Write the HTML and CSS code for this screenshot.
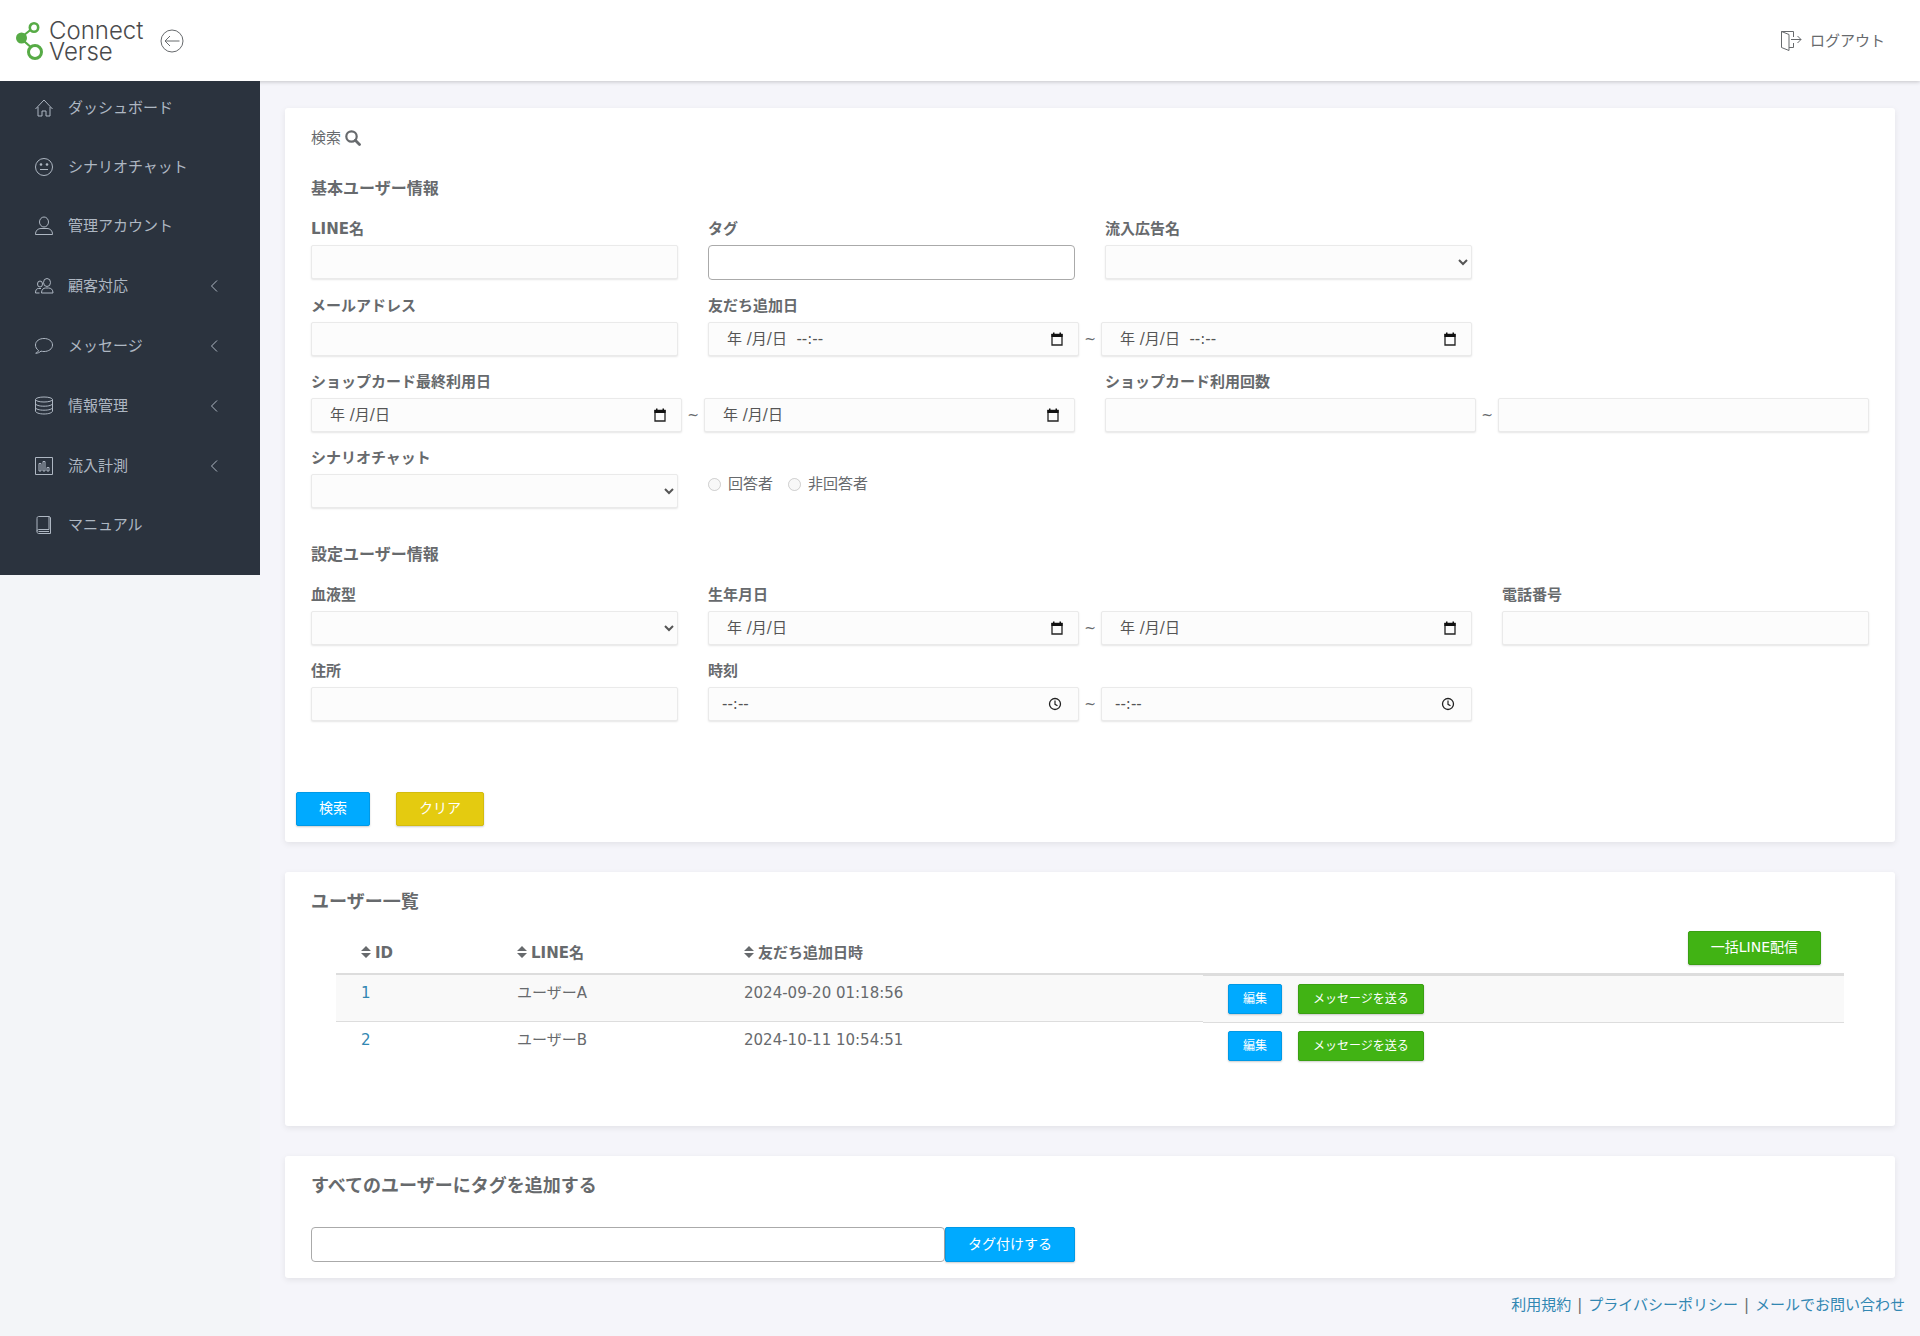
FILE: index.html
```html
<!DOCTYPE html>
<html lang="ja">
<head>
<meta charset="utf-8">
<meta name="viewport" content="width=device-width, initial-scale=1">
<title>Connect Verse</title>
<link rel="stylesheet" href="styles.css">
</head>
<body>
<svg width="0" height="0" class="sprite" aria-hidden="true">
  <symbol id="icon-calendar" viewBox="0 0 14 14"><path d="M2 2.500H12V13H2Z" fill="none" stroke="#222" stroke-width="1.300"/><path d="M1.400 2H12.600V5H1.400ZM3 .5H4.500V2H3ZM9.500.5H11V2H9.500Z" fill="#111"/></symbol>
  <symbol id="icon-clock" viewBox="0 0 14 14"><circle cx="7" cy="7" r="5.500" fill="none" stroke="#222" stroke-width="1.300"/><path d="M7 3.500V7.300L9.500 8.800" fill="none" stroke="#222" stroke-width="1.200"/></symbol>
</svg>
<header class="navbar">
  <a class="brand" href="#">
    <svg class="brand-mark" viewBox="0 0 28 40" width="28" height="40" aria-hidden="true">
      <g fill="none" stroke="#57ab46"><path d="M5 16.500 17.500 6.500M5 17.500 17 28" stroke-width="2.200"/><circle cx="18" cy="6.500" r="4.200" stroke-width="2.600" fill="#fff"/><circle cx="19" cy="31" r="6.500" stroke-width="3" fill="#fff"/></g>
      <circle cx="5.500" cy="17" r="5.500" fill="#57ab46"/>
    </svg>
    <span class="brand-name"><span>Connect</span><span>Verse</span></span>
  </a>
  <button class="toggle" type="button" aria-label="メニュー">
    <svg class="line-icon" viewBox="0 0 24 24" width="24" height="24"><circle cx="12" cy="12" r="11"/><path d="M19.500 12H5M10 7l-5 5 5 5"/></svg>
  </button>
  <a class="logout" href="#">
    <svg class="line-icon" viewBox="0 0 22 22" width="22" height="22"><path d="M1.500 1.500 9 4.500V20.500L1.500 17.500ZM1.500 1.500H13.500V7M13.500 13V17.500H9M11 9.500H21M17.500 6l3.500 3.500-3.500 3.500"/></svg>
    ログアウト
  </a>
</header>

<div class="wrapper">
  <nav class="sidebar">
    <ul class="menu">
      <li><a href="#"><svg class="line-icon" viewBox="0 0 20 20" width="20" height="20"><path d="M1.500 11 10 2l8.500 9M4 9v9h4v-5h4v5h4V9"/></svg>ダッシュボード</a></li>
      <li><a href="#"><svg class="line-icon" viewBox="0 0 20 20" width="20" height="20"><circle cx="10" cy="10" r="8.500"/><path d="M6 12.500h8"/><circle class="dot" cx="7" cy="7.500" r="1.300"/><circle class="dot" cx="13" cy="7.500" r="1.300"/></svg>シナリオチャット</a></li>
      <li><a href="#"><svg class="line-icon" viewBox="0 0 20 20" width="20" height="20"><ellipse cx="10" cy="6" rx="4.500" ry="5"/><path d="M1.500 18.500c0-4 2.500-6 5.500-6h6c3 0 5.500 2 5.500 6Z"/></svg>管理アカウント</a></li>
      <li><a class="parent" href="#"><svg class="line-icon" viewBox="0 0 20 20" width="20" height="20"><ellipse cx="13" cy="6.500" rx="3.500" ry="4"/><ellipse cx="6" cy="8" rx="2.500" ry="3"/><path d="M7.500 17c0-3.500 2-5 4-5h3c2.500 0 4.500 1.500 4.500 5ZM5.500 17h-4c0-3 1-4.500 3-4.500h2.500"/></svg>顧客対応<svg class="chevron line-icon" viewBox="0 0 8 14" width="8" height="14"><path d="M7 1.500 1.500 7 7 12.500"/></svg></a></li>
      <li><a class="parent" href="#"><svg class="line-icon" viewBox="0 0 20 20" width="20" height="20"><path d="M4.500 14.500C2.500 13 1.500 11.200 1.500 9c0-3.900 3.800-6.500 8.500-6.500s8.500 2.600 8.500 6.500-3.800 6.500-8.500 6.500c-1 0-2-.1-3-.4-1.400 1.400-3.300 2.200-5.300 2.100 1.500-.7 2.500-1.500 2.800-2.700Z"/></svg>メッセージ<svg class="chevron line-icon" viewBox="0 0 8 14" width="8" height="14"><path d="M7 1.500 1.500 7 7 12.500"/></svg></a></li>
      <li><a class="parent" href="#"><svg class="line-icon" viewBox="0 0 20 20" width="20" height="20"><ellipse cx="10" cy="3.500" rx="8.500" ry="2.500"/><path d="M1.500 3.500v11.500c0 1.600 3.600 3 8.500 3s8.500-1.400 8.500-3V3.500M1.500 7.500c0 1.600 3.600 2.700 8.500 2.700s8.500-1.100 8.500-2.700M1.500 11.500c0 1.600 3.600 2.700 8.500 2.700s8.500-1.100 8.500-2.700"/></svg>情報管理<svg class="chevron line-icon" viewBox="0 0 8 14" width="8" height="14"><path d="M7 1.500 1.500 7 7 12.500"/></svg></a></li>
      <li><a class="parent" href="#"><svg class="line-icon" viewBox="0 0 20 20" width="20" height="20"><path d="M1.500 1.500h17v17h-17ZM5 7.500h2v7.500h-2ZM9 5.500h2V15H9ZM13 11.500h2V15h-2Z"/></svg>流入計測<svg class="chevron line-icon" viewBox="0 0 8 14" width="8" height="14"><path d="M7 1.500 1.500 7 7 12.500"/></svg></a></li>
      <li><a href="#"><svg class="line-icon" viewBox="0 0 20 20" width="20" height="20"><path d="M4.500 1.500H15v13H4.500c-1 0-1.500 1-1.500 2s.5 2 1.500 2h12V2.500L15 1.500M3 16.500v-13c0-1.200.5-2 1.500-2M4.500 16.500H15"/></svg>マニュアル</a></li>
    </ul>
  </nav>

  <div class="main">
    <main class="content">
      <section class="card search-card">
        <p class="search-title">検索
          <svg viewBox="0 0 16 16" width="16" height="16" aria-hidden="true"><circle cx="6.500" cy="6.500" r="5.200" fill="none" stroke="currentColor" stroke-width="2.200"/><path d="M10.300 10.300 14.500 14.500" stroke="currentColor" stroke-width="2.800" stroke-linecap="round"/></svg>
        </p>
        <form>
          <h2 class="group-title">基本ユーザー情報</h2>
          <div class="fields">
            <div class="field"><label for="line-name">LINE名</label><input class="control" id="line-name" type="text"></div>
            <div class="field"><label for="tag">タグ</label><input class="tag-box" id="tag" type="text"></div>
            <div class="field"><label for="ad">流入広告名</label><select class="control" id="ad"><option></option></select></div>
            <div class="field first-col"><label for="mail">メールアドレス</label><input class="control" id="mail" type="text"></div>
            <div class="field wide"><label for="added-from">友だち追加日</label>
              <div class="range">
                <div class="control picker"><input id="added-from" type="text" value="年 /月/日  --:--"><button type="button" aria-label="日時を選択"><svg width="14" height="14"><use href="#icon-calendar"/></svg></button></div>
                <span>~</span>
                <div class="control picker"><input type="text" value="年 /月/日  --:--" aria-label="友だち追加日（終了）"><button type="button" aria-label="日時を選択"><svg width="14" height="14"><use href="#icon-calendar"/></svg></button></div>
              </div></div>
            <div class="field wide first-col"><label for="card-from">ショップカード最終利用日</label>
              <div class="range">
                <div class="control picker"><input id="card-from" type="text" value="年 /月/日"><button type="button" aria-label="日付を選択"><svg width="14" height="14"><use href="#icon-calendar"/></svg></button></div>
                <span>~</span>
                <div class="control picker"><input type="text" value="年 /月/日" aria-label="ショップカード最終利用日（終了）"><button type="button" aria-label="日付を選択"><svg width="14" height="14"><use href="#icon-calendar"/></svg></button></div>
              </div></div>
            <div class="field wide"><label for="count-from">ショップカード利用回数</label>
              <div class="range"><input class="control" id="count-from" type="text"><span>~</span><input class="control" type="text" aria-label="ショップカード利用回数（上限）"></div></div>
            <div class="field first-col"><label for="scenario">シナリオチャット</label><select class="control" id="scenario"><option></option></select></div>
            <div class="radios">
              <label><input type="radio" name="answer" disabled>回答者</label>
              <label><input type="radio" name="answer" disabled>非回答者</label>
            </div>
          </div>
          <h2 class="group-title">設定ユーザー情報</h2>
          <div class="fields">
            <div class="field"><label for="blood">血液型</label><select class="control" id="blood"><option></option></select></div>
            <div class="field wide"><label for="birth-from">生年月日</label>
              <div class="range">
                <div class="control picker"><input id="birth-from" type="text" value="年 /月/日"><button type="button" aria-label="日付を選択"><svg width="14" height="14"><use href="#icon-calendar"/></svg></button></div>
                <span>~</span>
                <div class="control picker"><input type="text" value="年 /月/日" aria-label="生年月日（終了）"><button type="button" aria-label="日付を選択"><svg width="14" height="14"><use href="#icon-calendar"/></svg></button></div>
              </div></div>
            <div class="field"><label for="tel">電話番号</label><input class="control" id="tel" type="text"></div>
            <div class="field"><label for="address">住所</label><input class="control" id="address" type="text"></div>
            <div class="field wide"><label for="time-from">時刻</label>
              <div class="range">
                <div class="control picker time"><input id="time-from" type="text" value="--:--"><button type="button" aria-label="時刻を選択"><svg width="14" height="14"><use href="#icon-clock"/></svg></button></div>
                <span>~</span>
                <div class="control picker time"><input type="text" value="--:--" aria-label="時刻（終了）"><button type="button" aria-label="時刻を選択"><svg width="14" height="14"><use href="#icon-clock"/></svg></button></div>
              </div></div>
          </div>
          <div class="actions">
            <button class="btn btn-primary" type="button">検索</button>
            <button class="btn btn-warning" type="button">クリア</button>
          </div>
        </form>
      </section>

      <section class="card list-card">
        <h2 class="card-title">ユーザー一覧</h2>
        <table class="users">
          <colgroup><col class="col-id"><col class="col-name"><col class="col-date"><col></colgroup>
          <thead>
            <tr>
              <th><svg class="sort" viewBox="0 0 10 12" width="10" height="12"><path d="M0 5 5 0 10 5ZM0 7H10L5 12Z"/></svg>ID</th>
              <th><svg class="sort" viewBox="0 0 10 12" width="10" height="12"><path d="M0 5 5 0 10 5ZM0 7H10L5 12Z"/></svg>LINE名</th>
              <th><svg class="sort" viewBox="0 0 10 12" width="10" height="12"><path d="M0 5 5 0 10 5ZM0 7H10L5 12Z"/></svg>友だち追加日時</th>
              <th class="bulk"><button class="btn btn-success" type="button">一括LINE配信</button></th>
            </tr>
          </thead>
          <tbody>
            <tr>
              <td><a href="#">1</a></td><td>ユーザーA</td><td>2024-09-20 01:18:56</td>
              <td class="row-actions"><div class="buttons"><button class="btn btn-small btn-primary" type="button">編集</button><button class="btn btn-small btn-success" type="button">メッセージを送る</button></div></td>
            </tr>
            <tr>
              <td><a href="#">2</a></td><td>ユーザーB</td><td>2024-10-11 10:54:51</td>
              <td class="row-actions"><div class="buttons"><button class="btn btn-small btn-primary" type="button">編集</button><button class="btn btn-small btn-success" type="button">メッセージを送る</button></div></td>
            </tr>
          </tbody>
        </table>
      </section>

      <section class="card tag-card">
        <h2 class="card-title"><label for="all-tag">すべてのユーザーにタグを追加する</label></h2>
        <form class="tag-form">
          <input class="tag-box" id="all-tag" type="text">
          <button class="btn btn-primary" type="button">タグ付けする</button>
        </form>
      </section>
    </main>
    <footer class="footer">
      <a href="#">利用規約</a><span>|</span><a href="#">プライバシーポリシー</a><span>|</span><a href="#">メールでお問い合わせ</a>
    </footer>
  </div>
</div>
</body>
</html>
```
FILE: styles.css
```css
*,
*::before,
*::after {
  box-sizing: border-box;
}

body {
  margin: 0;
  min-height: 100vh;
  display: flex;
  flex-direction: column;
  background: #f3f5f8;
  color: #676a6d;
  font-family: "DejaVu Sans", "Noto Sans CJK JP", sans-serif;
  font-size: 15px;
  line-height: 22px;
}

a {
  color: #3287b2;
  text-decoration: none;
}

input,
select,
button {
  font-family: inherit;
  font-size: 14px;
}

.sprite {
  display: none;
}

.line-icon {
  fill: none;
  stroke: currentColor;
  stroke-width: 1;
  flex: none;
}

.line-icon .dot {
  fill: currentColor;
  stroke: none;
}

/* Top bar */
.navbar {
  display: flex;
  align-items: center;
  height: 81px;
  padding: 0 35px 0 16px;
  background: #fff;
  box-shadow: 0 1px 4px rgba(0, 0, 0, 0.2);
  z-index: 1;
}

.brand {
  display: flex;
  align-items: center;
  gap: 5px;
  color: #4a4a4c;
}

.brand-name {
  display: flex;
  flex-direction: column;
  width: 94px;
  font-family: Inter, sans-serif;
  font-size: 24px;
  font-weight: 300;
  line-height: 21px;
}

.toggle {
  display: flex;
  margin-left: 17px;
  padding: 0;
  border: 0;
  background: none;
  color: #676a6d;
}

.logout {
  display: flex;
  align-items: center;
  gap: 8px;
  margin-left: auto;
  color: #676a6d;
}

.wrapper {
  display: flex;
  align-items: flex-start;
  flex: 1;
}

/* Side menu */
.sidebar {
  flex: none;
  width: 260px;
  padding-bottom: 18px;
  background: #2b333e;
  z-index: 2;
}

.menu {
  margin: 0;
  padding: 0;
  list-style: none;
}

.menu a {
  display: flex;
  align-items: center;
  gap: 14px;
  height: 59px;
  padding: 16px 42px 21px 34px;
  color: #aeb7c2;
}

.menu .parent {
  height: 60px;
}

.chevron {
  margin-left: auto;
}

/* Main column */
.main {
  flex: 1;
  min-width: 0;
  align-self: stretch;
  background: #f5f5fa;
}

.content {
  display: flex;
  flex-direction: column;
  gap: 30px;
  padding: 27px 25px 0;
}

.card {
  padding: 0 26px;
  border-radius: 3px;
  background: #fff;
  box-shadow: 0 2px 6px rgba(0, 0, 0, 0.08);
}

.search-card {
  padding-top: 19px;
  padding-bottom: 16px;
}

.search-title {
  display: flex;
  align-items: center;
  gap: 4px;
  margin: 0 0 29px;
}

.group-title {
  margin: 0 0 18px;
  font-size: 16px;
  line-height: 22px;
}

.fields {
  display: grid;
  grid-template-columns: repeat(4, minmax(0, 1fr));
  gap: 15px 30px;
}

.fields + .group-title {
  margin-top: 36px;
}

.wide {
  grid-column-end: span 2;
}

.first-col {
  grid-column-start: 1;
}

.field > label {
  display: block;
  margin-bottom: 5px;
  font-weight: 700;
}

.control,
.tag-box {
  display: block;
  width: 100%;
  min-width: 0;
  height: 34px;
  margin: 0;
  padding: 6px 12px;
  border: 1px solid #eaeaea;
  border-radius: 2px;
  background: #fcfcfc;
  box-shadow: 0 1px 2px rgba(0, 0, 0, 0.1);
  color: #555;
}

.tag-box {
  height: 35px;
  border-color: #aaa;
  border-radius: 4px;
  background: #fff;
  box-shadow: none;
}

.range {
  display: flex;
  align-items: center;
}

.range span {
  flex: none;
  width: 22px;
  text-align: center;
  font-size: 14px;
}

.picker {
  display: flex;
  align-items: center;
  padding: 0 14px 0 18px;
}

.picker.time {
  padding: 0 16px 0 13px;
}

.picker input {
  flex: 1;
  min-width: 0;
  padding: 0;
  border: 0;
  background: none;
  color: #555;
  font-size: 15px;
  line-height: 20px;
}

.picker button {
  display: flex;
  flex: none;
  padding: 0;
  border: 0;
  background: none;
}

.radios {
  display: flex;
  gap: 15px;
  padding-top: 26px;
}

.radios label {
  display: flex;
  align-items: center;
  gap: 7px;
  height: 22px;
}

.radios input {
  width: 13px;
  height: 13px;
  margin: 0;
}

.actions {
  display: flex;
  gap: 26px;
  margin: 71px -15px 0;
}

/* Buttons */
.btn {
  height: 34px;
  padding: 0 22px 2px;
  border: 1px solid;
  border-radius: 2px;
  box-shadow: 0 1px 2px rgba(0, 0, 0, 0.2);
  color: #fff;
  line-height: 20px;
  white-space: nowrap;
}

.btn-small {
  height: 30px;
  padding: 0 14px;
  font-size: 12px;
}

.btn-primary {
  background: #00aaff;
  border-color: #0099e6;
}

.btn-warning {
  background: #e4cb10;
  border-color: #d4bc0e;
}

.btn-success {
  background: #41b314;
  border-color: #3aa012;
}

/* User list */
.card-title {
  margin: 0;
  font-size: 18px;
  line-height: 24px;
}

.list-card {
  padding-top: 18px;
  padding-bottom: 57px;
}

.users {
  width: calc(100% - 50px);
  margin: 9px 25px 0;
  table-layout: fixed;
  border-collapse: separate;
  border-spacing: 0;
}

.col-id {
  width: 156px;
}

.col-name {
  width: 227px;
}

.col-date {
  width: 484px;
}

.users th {
  padding: 8px 25px 9px;
  border-bottom: 2px solid #ddd;
  text-align: left;
  vertical-align: bottom;
}

.users .bulk {
  padding: 8px 23px 8px 25px;
  text-align: right;
}

.bulk .btn {
  display: inline-block;
  vertical-align: top;
}

.sort {
  margin-right: 4px;
  fill: currentColor;
}

.users td {
  padding: 7px 25px;
  border-bottom: 1px solid #ddd;
  vertical-align: top;
}

.users tr:last-child td {
  border-bottom: 0;
}

.users tbody tr:nth-child(odd) td {
  background: #f9f9f9;
}

.users .row-actions {
  padding: 8px 25px;
  border-top: 1px solid #ddd;
  border-bottom: 0;
}

.buttons {
  display: flex;
  gap: 16px;
}

/* Tag form */
.tag-card {
  padding-top: 18px;
  padding-bottom: 16px;
}

.tag-form {
  display: flex;
  width: calc(50% - 15px);
  margin-top: 29px;
}

.tag-form .btn {
  flex: none;
  height: 35px;
}

.footer {
  display: flex;
  justify-content: flex-end;
  gap: 6px;
  padding: 16px 15px 20px;
}
```
